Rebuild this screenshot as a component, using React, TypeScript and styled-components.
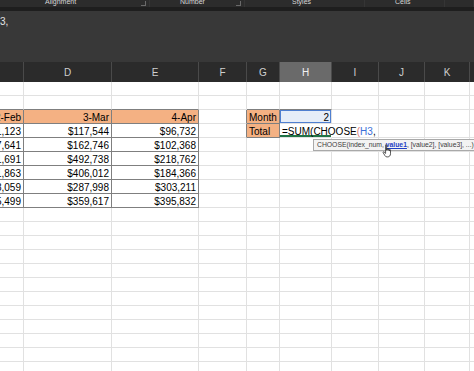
import React from 'react'
import styled, {createGlobalStyle} from 'styled-components'

const GRID = '#e1e1e1'
const BOX = '#7f7f7f'
const ORANGE = '#f4b183'

const COLUMNS = [
  {key: 'C', width: 24},
  {key: 'D', width: 88},
  {key: 'E', width: 87},
  {key: 'F', width: 48},
  {key: 'G', width: 33},
  {key: 'H', width: 52},
  {key: 'I', width: 47},
  {key: 'J', width: 46},
  {key: 'K', width: 45},
  {key: 'L', width: 40},
]

const TEMPLATE = COLUMNS.map(c => `${c.width}px`).join(' ')

const RIBBON = [
  {label: 'Alignment', width: 150, pad: 45, launcher: true},
  {label: 'Number', width: 95, pad: 30, launcher: true},
  {label: 'Styles', width: 120, pad: 47, launcher: false},
  {label: 'Cells', width: 80, pad: 30, launcher: false},
  {label: '', width: 29, pad: 0, launcher: false},
]

const MONTHS = ['2-Feb', '3-Mar', '4-Apr']

const VALUES = [
  ['$151,123', '$117,544', '$96,732'],
  ['$127,641', '$162,746', '$102,368'],
  ['$141,691', '$492,738', '$218,762'],
  ['$131,863', '$406,012', '$184,366'],
  ['$238,059', '$287,998', '$303,211'],
  ['$105,499', '$359,617', '$395,832'],
]

const ROW_COUNT = 21

type CellSpec = {
  text?: React.ReactNode
  fill?: string
  right: string
  bottom: string
  align: 'left' | 'right'
  variant?: 'ref' | 'active'
}

// row numbers follow the sheet: row 3 holds the month headers
const cellSpec = (row: number, col: number): CellSpec => {
  const spec: CellSpec = {right: GRID, bottom: GRID, align: 'right'}
  const inTable = col <= 2 && row >= 3 && row <= 9

  if (inTable) {
    spec.right = BOX
    spec.bottom = BOX
    if (row === 3) {
      spec.fill = ORANGE
      spec.text = MONTHS[col]
    } else {
      spec.text = VALUES[row - 4][col]
    }
  }
  if (col <= 2 && row === 2) spec.bottom = BOX

  // Month / Total labels
  if (col === 3 && (row === 3 || row === 4)) spec.right = BOX
  if ((col === 4 || col === 5) && row === 2) spec.bottom = BOX
  if (col === 4 && (row === 3 || row === 4)) {
    spec.fill = ORANGE
    spec.right = BOX
    spec.bottom = BOX
    spec.align = 'left'
    spec.text = row === 3 ? 'Month' : 'Total'
  }
  if (col === 5 && row === 3) {
    spec.variant = 'ref'
    spec.text = '2'
  }
  if (col === 5 && row === 4) {
    spec.variant = 'active'
    spec.align = 'left'
    spec.right = 'transparent'
    spec.text = (
      <>
        =SUM(CHOOSE<Paren>(</Paren>
        <RefText>H3</RefText>,
      </>
    )
  }
  return spec
}

export default function App() {
  return (
    <>
      <GlobalStyle />
      <Window>
        <RibbonBar>
          {RIBBON.map((group, i) => (
            <RibbonGroup key={i} $width={group.width} $pad={group.pad}>
              <RibbonLabel>{group.label}</RibbonLabel>
              {group.launcher && <Launcher />}
            </RibbonGroup>
          ))}
        </RibbonBar>
        <RibbonEdge />
        <FormulaArea>
          <FormulaText>3,</FormulaText>
        </FormulaArea>
        <HeaderRow>
          {COLUMNS.map(c => (
            <ColumnHeader key={c.key} $selected={c.key === 'H'}>
              {c.key === 'C' || c.key === 'L' ? '' : c.key}
            </ColumnHeader>
          ))}
        </HeaderRow>
        <Sheet>
          {Array.from({length: ROW_COUNT}, (_, r) =>
            COLUMNS.map((c, ci) => {
              const spec = cellSpec(r + 1, ci)
              return (
                <Cell
                  key={`${c.key}${r + 1}`}
                  $fill={spec.fill}
                  $right={spec.right}
                  $bottom={spec.bottom}
                  $align={spec.align}
                  $variant={spec.variant}>
                  {spec.text}
                </Cell>
              )
            }),
          )}
          <Tooltip>
            CHOOSE(index_num, <TipArg>value1</TipArg>, [value2], [value3], ...)
          </Tooltip>
          <HandCursor width="11" height="14" viewBox="0 0 11 14">
            <path
              d="M3.6 1.1c0-.7 1-.7 1 0V6.3h.3V5c0-.7 1-.7 1 0v1.4h.3V5.5c0-.7 1-.7 1 0v1.3h.3v-.7c0-.7 1-.7 1 0v3.7c0 1.7-1.1 3.1-2.7 3.1H4.9c-.9 0-1.5-.5-2-1.3L1.2 8.7c-.4-.7.3-1.2.9-.7l1.5 1.4z"
              fill="#fff"
              stroke="#111"
              strokeWidth="0.7"
              strokeLinejoin="round"
            />
          </HandCursor>
        </Sheet>
      </Window>
    </>
  )
}

const GlobalStyle = createGlobalStyle`
  html, body {
    margin: 0;
    padding: 0;
    background: #ffffff;
  }
  body {
    font-family: 'Liberation Sans', Arial, sans-serif;
  }
`

const Window = styled.div`
  width: 474px;
  height: 371px;
  overflow: hidden;
  background: #ffffff;
  display: flex;
  flex-direction: column;
`

const RibbonBar = styled.div`
  display: flex;
  height: 7px;
  flex: 0 0 7px;
  background: #2c2c2c;
  overflow: hidden;
`

const RibbonGroup = styled.div<{$width: number; $pad: number}>`
  box-sizing: border-box;
  flex: 0 0 ${p => p.$width}px;
  padding-left: ${p => p.$pad}px;
  padding-right: 3px;
  display: flex;
  align-items: flex-end;
  justify-content: space-between;
  border-right: 1px solid #353535;
`

const RibbonLabel = styled.span`
  font-size: 7px;
  line-height: 8px;
  margin-bottom: 1px;
  color: #d6d6d6;
  white-space: nowrap;
`

const Launcher = styled.span`
  width: 4px;
  height: 4px;
  margin-bottom: 1px;
  border-right: 1px solid #6a6a6a;
  border-bottom: 1px solid #6a6a6a;
`

const RibbonEdge = styled.div`
  flex: 0 0 4px;
  background: #1e1e1e;
`

const FormulaArea = styled.div`
  flex: 0 0 51px;
  background: #383838;
  padding-top: 5px;
  box-sizing: border-box;
`

const FormulaText = styled.div`
  font-size: 10px;
  line-height: 12px;
  color: #e4e4e4;
`

const HeaderRow = styled.div`
  display: grid;
  grid-template-columns: ${TEMPLATE};
  flex: 0 0 20px;
  background: #2b2b2b;
`

const ColumnHeader = styled.div<{$selected: boolean}>`
  box-sizing: border-box;
  display: flex;
  align-items: center;
  justify-content: center;
  border-right: 1px solid #4a4a4a;
  background: ${p => (p.$selected ? '#6a6a6a' : 'transparent')};
  color: ${p => (p.$selected ? '#f2f2f2' : '#cfcfcf')};
  font-size: 10px;
`

const Sheet = styled.div`
  position: relative;
  display: grid;
  grid-template-columns: ${TEMPLATE};
  grid-auto-rows: 14px;
  flex: 1;
  overflow: hidden;
`

const Cell = styled.div<{
  $fill?: string
  $right: string
  $bottom: string
  $align: 'left' | 'right'
  $variant?: 'ref' | 'active'
}>`
  box-sizing: border-box;
  position: relative;
  display: flex;
  justify-content: ${p => (p.$align === 'right' ? 'flex-end' : 'flex-start')};
  padding: 0 2px;
  border-right: 1px solid ${p => p.$right};
  border-bottom: 1px solid ${p => p.$bottom};
  background: ${p => (p.$variant === 'ref' ? '#e6edf8' : p.$fill ?? 'transparent')};
  box-shadow: ${p =>
    p.$variant === 'ref' ? 'inset 0 0 0 1px #4f7fd0' : p.$variant === 'active' ? 'inset 0 -2px 0 #217346' : 'none'};
  z-index: ${p => (p.$variant === 'active' ? 1 : 'auto')};
  font-size: 10px;
  line-height: 16px;
  color: #000000;
  white-space: nowrap;
`

const Paren = styled.span`
  color: #e0786e;
`

const RefText = styled.span`
  color: #3a6fd8;
`

const Tooltip = styled.div`
  position: absolute;
  left: 313px;
  top: 57px;
  height: 12px;
  box-sizing: border-box;
  padding: 0 3px;
  background: #f3f3f3;
  border: 1px solid #a9a9a9;
  font-size: 6.8px;
  line-height: 10px;
  color: #3c3c3c;
  white-space: nowrap;
  z-index: 2;
`

const TipArg = styled.span`
  color: #1f3fc4;
  font-weight: bold;
  text-decoration: underline;
`

const HandCursor = styled.svg`
  position: absolute;
  left: 382px;
  top: 62px;
  z-index: 3;
`
